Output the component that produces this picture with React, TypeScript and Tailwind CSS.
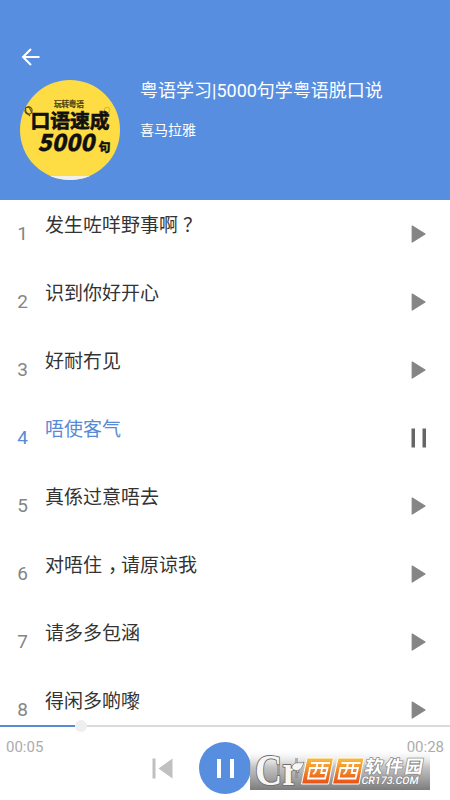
import React from "react";

const tracks: string[] = [
  "发生咗咩野事啊？",
  "识到你好开心",
  "好耐冇见",
  "唔使客气",
  "真係过意唔去",
  "对唔住，请原谅我",
  "请多多包涵",
  "得闲多啲嚟",
];

const activeTrack = 3;

function TrackTitle({ text }: { text: string }) {
  return (
    <>
      {Array.from(text).map((ch, i) => {
        if (ch === "，") {
          return (
            <span key={i} lang="zh-CN" className="pl-[6px] -tracking-[6px]">
              {ch}
            </span>
          );
        }
        if (ch === "？") {
          return (
            <span key={i} lang="zh-CN" className="pl-[5px]">
              {ch}
            </span>
          );
        }
        return <React.Fragment key={i}>{ch}</React.Fragment>;
      })}
    </>
  );
}

function Cover() {
  return (
    <svg width="100" height="100" viewBox="0 0 100 100" className="mt-[11px] shrink-0">
      <defs>
        <clipPath id="disc">
          <circle cx="50" cy="50" r="50" />
        </clipPath>
      </defs>
      <g clipPath="url(#disc)" fontFamily="'Noto Sans CJK SC', sans-serif">
        <rect width="100" height="100" fill="#fddd43" />
        <rect y="96" width="100" height="4" fill="#efefed" />
        <g fill="none" stroke="#54491d" strokeWidth="1.1">
          <circle cx="8.500" cy="30.500" r="3.600" />
          <path d="M5 25l1 7 4 4M3 28l6-1 3 6" />
        </g>
        <circle cx="87" cy="30" r="2.800" fill="none" stroke="#c7a941" strokeWidth="0.800" />
        <text x="34" y="26.800" fontSize="7.700" fontWeight="700" fill="#55420f" stroke="#55420f" strokeWidth="0.200" textLength="30">
          玩转粤语
        </text>
        <text
          x="10.500"
          y="48"
          fontSize="19.800"
          fontWeight="700"
          fill="#111"
          stroke="#111"
          strokeWidth="0.700"
          textLength="79"
        >
          口语速成
        </text>
        <text
          transform="translate(17.500 70.800) skewX(-12)"
          fontSize="23.500"
          fontWeight="900"
          fill="#111"
          stroke="#111"
          strokeWidth="0.300"
          textLength="57"
          lengthAdjust="spacingAndGlyphs"
        >
          5000
        </text>
        <text x="78.500" y="71.500" fontSize="12" fontWeight="900" fill="#111" stroke="#111" strokeWidth="0.300">
          句
        </text>
      </g>
    </svg>
  );
}

function Watermark() {
  return (
    <svg width="180" height="42" viewBox="0 0 180 42" className="absolute top-[748px] left-[250px] overflow-visible">
      <defs>
        <linearGradient id="plate" x1="0" y1="0" x2="0" y2="1">
          <stop offset="0" stopColor="#fff" stopOpacity="0" />
          <stop offset="0.450" stopColor="#bdbdbd" stopOpacity="0.900" />
          <stop offset="1" stopColor="#7c7c7c" />
        </linearGradient>
        <linearGradient id="tile" x1="0" y1="0" x2="0" y2="1">
          <stop offset="0" stopColor="#f9bd3c" />
          <stop offset="1" stopColor="#e94f17" />
        </linearGradient>
      </defs>
      <rect width="180" height="42" fill="url(#plate)" />
      <path d="M27 10h3v20h-3zM45 10h3v20h-3z" fill="#8a8a8a" opacity="0.600" />
      <g fill="#f6f6f6" stroke="#707070" strokeWidth="2" paintOrder="stroke" strokeLinejoin="round">
        <text
          x="5"
          y="36.500"
          fontFamily="'Liberation Serif', serif"
          fontWeight="700"
          fontSize="45"
          textLength="44"
          lengthAdjust="spacingAndGlyphs"
        >
          Cr
        </text>
      </g>
      <path d="M43 17c3-4 7-1 11-3-2 7-5 10-10 8-2-1-3-3-1-5z" fill="#f6f6f6" stroke="#707070" strokeWidth="0.700" />
      <path d="M57 10H83.500l-5 26H51.500zM88 10h26l-5 26H82.500z" fill="url(#tile)" stroke="#fff" strokeWidth="1" />
      <g fill="none" stroke="#fff" strokeWidth="1.800">
        <path d="M61 15h19M60 20h17.500L75 30.500H58zM67.500 15l-1.200 6q-.8 4-3.500 5M73 15l-1.800 10h4.500" />
        <path d="M91.500 15h19M90.500 20H108l-2.500 10.500h-17zM98 15l-1.200 6q-.8 4-3.500 5M103.500 15l-1.800 10h4.500" />
      </g>
      <g fill="#fff" stroke="#858585" strokeWidth="1.400" paintOrder="stroke" strokeLinejoin="round">
        <text
          transform="translate(114 24.500) skewX(-10)"
          fontFamily="'Noto Sans CJK SC', sans-serif"
          fontWeight="700"
          fontSize="18"
          textLength="58"
        >
          软件园
        </text>
        <text
          transform="translate(111 36) skewX(-10)"
          fontSize="10.500"
          fontFamily="Roboto, sans-serif"
          fontWeight="500"
          textLength="57"
          lengthAdjust="spacingAndGlyphs"
        >
          CR173.COM
        </text>
      </g>
    </svg>
  );
}

export default function App() {
  return (
    <div className="relative flex h-[800px] w-[450px] flex-col overflow-hidden bg-white font-[Roboto,'Noto_Sans_CJK_SC',sans-serif]">
      <header className="h-[200px] shrink-0 bg-[#588ee0] px-5 pt-[47px] text-white">
        <svg width="22" height="22" viewBox="0 0 22 22" fill="none" stroke="#fff" strokeWidth="2" className="block">
          <path d="M19.500 10H3.500M11 2l-8 8 8 8" />
        </svg>
        <div className="flex gap-5">
          <Cover />
          <div className="pt-[9px]">
            <h1 className="text-[18px] leading-[26px] whitespace-nowrap">粤语学习|5000句学粤语脱口说</h1>
            <p className="mt-[16px] text-[14px] leading-5">喜马拉雅</p>
          </div>
        </div>
      </header>

      <ul className="h-[525px] shrink-0 overflow-hidden">
        {tracks.map((title, i) => (
          <li
            key={title}
            className={
              i === activeTrack
                ? "flex h-[68px] items-center text-[#588ad6]"
                : "flex h-[68px] items-center text-[#333]"
            }
          >
            <span
              className={
                i === activeTrack
                  ? "w-[45px] text-center text-[19px] leading-6"
                  : "w-[45px] text-center text-[19px] leading-6 text-[#858585]"
              }
            >
              {i + 1}
            </span>
            <span className="flex-1 pb-[17px] text-[19px] leading-7">
              <TrackTitle text={title} />
            </span>
            <svg width="18" height="20" viewBox="0 0 18 20" className="mr-[22px]">
              {i === activeTrack ? (
                <path d="M1.500 .5h3.500v19H1.500zM12.500 .5H16v19h-3.500z" fill="#666" />
              ) : (
                <path d="M2.200 2l12.800 8-12.800 8z" fill="#858585" stroke="#858585" strokeWidth="1.200" strokeLinejoin="round" />
              )}
            </svg>
          </li>
        ))}
      </ul>

      <footer className="-mt-[5px] flex-1">
        <div className="flex h-3 items-center">
          <div className="h-[2px] w-[75px] bg-[#588bd4]" />
          <div className="size-3 rounded-full bg-[#efefef]" />
          <div className="h-[2px] flex-1 bg-[#dadada]" />
        </div>
        <div className="flex h-[30px] items-center justify-between px-[6px] text-[15px] text-[#ababab]">
          <span>00:05</span>
          <span>00:28</span>
        </div>
        <div className="-mt-5 flex items-center justify-center gap-[25px]">
          <svg width="22" height="22" viewBox="0 0 22 22" fill="#c0c0c0">
            <path d="M.5 1.500h3v20h-3zM20.500 1.500v20L6.500 11.500z" />
          </svg>
          <div className="flex size-[52px] items-center justify-center gap-[9px] rounded-full bg-[#588ee0]">
            <div className="h-[19px] w-1 bg-white" />
            <div className="h-[19px] w-1 bg-white" />
          </div>
          <div className="w-[22px]" />
        </div>
      </footer>
      <Watermark />
    </div>
  );
}
